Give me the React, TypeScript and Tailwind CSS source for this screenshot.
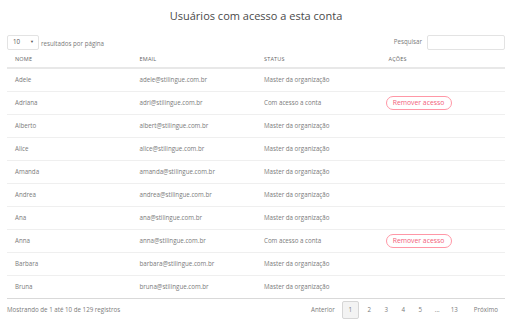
import React from 'react';

const users = [
    { name: 'Adele', email: 'adele@stilingue.com.br', status: 'Master da organização' },
    { name: 'Adriana', email: 'adri@stilingue.com.br', status: 'Com acesso a conta', remove: true },
    { name: 'Alberto', email: 'albert@stilingue.com.br', status: 'Master da organização' },
    { name: 'Alice', email: 'alice@stilingue.com.br', status: 'Master da organização' },
    { name: 'Amanda', email: 'amanda@stilingue.com.br', status: 'Master da organização' },
    { name: 'Andrea', email: 'andrea@stilingue.com.br', status: 'Master da organização' },
    { name: 'Ana', email: 'ana@stilingue.com.br', status: 'Master da organização' },
    { name: 'Anna', email: 'anna@stilingue.com.br', status: 'Com acesso a conta', remove: true },
    { name: 'Barbara', email: 'barbara@stilingue.com.br', status: 'Master da organização' },
    { name: 'Bruna', email: 'bruna@stilingue.com.br', status: 'Master da organização' },
];

const pages = ['2', '3', '4', '5', '...', '13'];

export default function App(): React.ReactNode {
    return (
        <div className="w-[512px] h-[321px] bg-white px-[7px] overflow-hidden text-[#7a7a7a]" style={{ fontFamily: '"Open Sans", sans-serif' }}>
            {/* Title */}
            <h1 className="text-center text-[11px] text-[#4a4a4a] h-[33px] pt-[6px] leading-[20px]">
                Usuários com acesso a esta conta
            </h1>

            {/* Controls */}
            <div className="flex items-center justify-between h-[18px]">
                <div className="flex items-center">
                    <div className="w-[32px] h-[15px] border border-[#e3e3e3] rounded-[2px] flex items-center justify-between pl-[5px] pr-[4px] text-[6.2px] text-[#555]">
                        <span>10</span>
                        <span className="text-[4px]">▼</span>
                    </div>
                    <span className="ml-[2px] text-[6.2px] mt-[3px]">resultados por página</span>
                </div>
                <div className="flex items-center">
                    <span className="text-[6.2px] mr-[5px]">Pesquisar</span>
                    <div className="w-[78px] h-[15px] border border-[#e3e3e3] rounded-[2px]" />
                </div>
            </div>

            {/* Table */}
            <div className="grid grid-cols-4 h-[18px] border-b-2 border-[#e8e8e8] text-[5.5px] text-[#666] uppercase tracking-[0.2px] items-center">
                <div className="pl-[8px]">Nome</div>
                <div className="pl-[8px]">Email</div>
                <div className="pl-[8px]">Status</div>
                <div className="pl-[8px]">Ações</div>
            </div>
            <div className="border-b border-[#d9d9d9]">
                {users.map((u, i) => (
                    <div
                        key={u.name}
                        className={`grid grid-cols-4 items-center text-[6.2px] ${i < users.length - 1 ? 'h-[23px] border-b border-[#efefef]' : 'h-[22px]'}`}
                    >
                        <div className="pl-[8px]">{u.name}</div>
                        <div className="pl-[8px]">{u.email}</div>
                        <div className="pl-[8px]">{u.status}</div>
                        <div className="pl-[5px]">
                            {u.remove && (
                                <button className="w-[66px] h-[14px] rounded-full border border-[#ff97a6] text-[#f2607a] text-[6.8px] leading-none">
                                    Remover acesso
                                </button>
                            )}
                        </div>
                    </div>
                ))}
            </div>

            {/* Footer */}
            <div className="flex items-center justify-between h-[22px] text-[6.2px]">
                <span>Mostrando de 1 até 10 de 129 registros</span>
                <div className="flex items-center mr-[7px]">
                    <span className="mr-[7px]">Anterior</span>
                    <span className="w-[17px] h-[18px] mr-[2px] flex items-center justify-center bg-[#f3f3f3] border border-[#d6d6d6] rounded-[2px]">
                        1
                    </span>
                    {pages.map((p) => (
                        <span key={p} className="w-[17px] h-[18px] flex items-center justify-center">
                            {p}
                        </span>
                    ))}
                    <span className="ml-[11px]">Próximo</span>
                </div>
            </div>
        </div>
    );
}
